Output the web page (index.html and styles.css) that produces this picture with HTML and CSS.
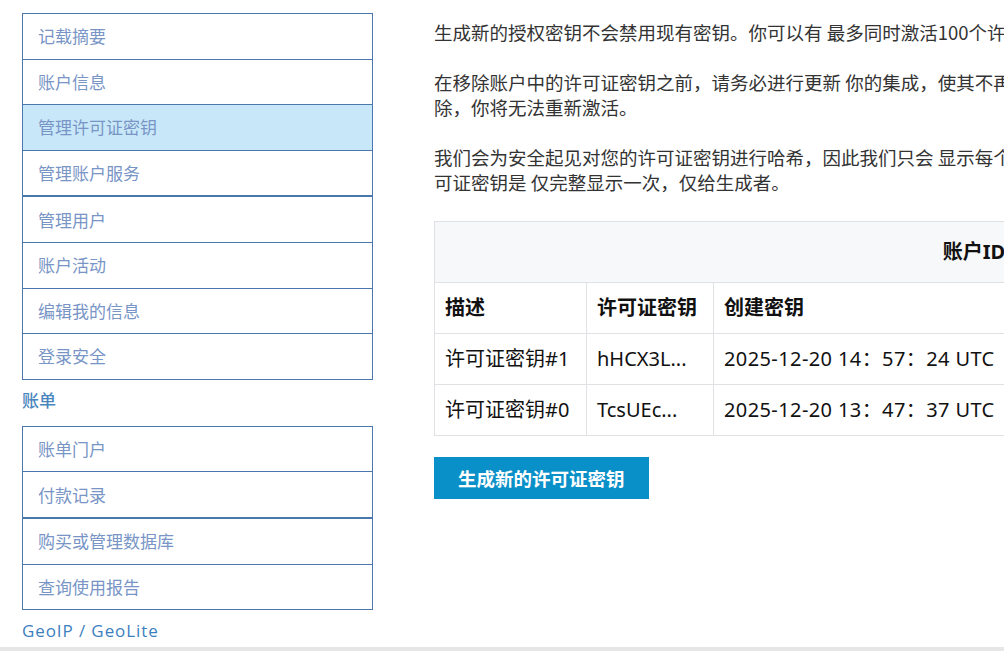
FILE: index.html
```html
<!DOCTYPE html>
<html lang="zh-CN">
<head>
<meta charset="utf-8">
<title>管理许可证密钥</title>
<link rel="stylesheet" href="styles.css">
</head>
<body>
<div class="page">
  <aside class="sidebar">
    <ul class="nav">
      <li><a href="#">记载摘要</a></li>
      <li><a href="#">账户信息</a></li>
      <li class="active"><a href="#">管理许可证密钥</a></li>
      <li><a href="#">管理账户服务</a></li>
    </ul>
    <ul class="nav">
      <li><a href="#">管理用户</a></li>
      <li><a href="#">账户活动</a></li>
      <li><a href="#">编辑我的信息</a></li>
      <li><a href="#">登录安全</a></li>
    </ul>
    <h3 class="nav-title">账单</h3>
    <ul class="nav">
      <li><a href="#">账单门户</a></li>
      <li><a href="#">付款记录</a></li>
    </ul>
    <ul class="nav">
      <li><a href="#">购买或管理数据库</a></li>
      <li><a href="#">查询使用报告</a></li>
    </ul>
    <h3 class="nav-title geo">GeoIP / GeoLite</h3>
  </aside>
  <main class="content">
    <p>生成新的授权密钥不会禁用现有密钥。你可以有 最多同时激活100个许可证密钥。</p>
    <p>在移除账户中的许可证密钥之前，请务必进行更新 你的集成，使其不再使用该密钥。如果许可证密钥被移除，你将无法重新激活。</p>
    <p>我们会为安全起见对您的许可证密钥进行哈希，因此我们只会 显示每个许可证密钥的前几个字符。新的许可证密钥是 仅完整显示一次，仅给生成者。</p>
    <table class="keys">
      <colgroup>
        <col class="c1"><col class="c2"><col class="c3"><col class="c4"><col class="c5">
      </colgroup>
      <thead>
        <tr class="acct"><th colspan="5">账户ID：1283596</th></tr>
        <tr class="heads"><th>描述</th><th>许可证密钥</th><th>创建密钥</th><th>最后使用</th><th>操作</th></tr>
      </thead>
      <tbody>
        <tr><td>许可证密钥#1</td><td>hHCX3L...</td><td>2025-12-20 14：57：24 UTC</td><td>从未使用</td><td>移除</td></tr>
        <tr><td>许可证密钥#0</td><td>TcsUEc...</td><td>2025-12-20 13：47：37 UTC</td><td>从未使用</td><td>移除</td></tr>
      </tbody>
    </table>
    <button class="btn" type="button">生成新的许可证密钥</button>
  </main>
</div>
</body>
</html>
```

FILE: styles.css
```css
html, body {
  margin: 0;
  padding: 0;
  overflow: hidden;
  background: #fff;
}
body {
  font-family: "Noto Sans", "Noto Sans CJK SC", sans-serif;
  color: #222;
  height: 651px;
  box-sizing: border-box;
  border-bottom: 4px solid #e6e6e6;
}
.page {
  display: flex;
  gap: 61px;
  padding-left: 22px;
  width: 1800px;
}
.sidebar {
  width: 351px;
  flex: none;
  padding-top: 13px;
}
.nav {
  list-style: none;
  margin: 0;
  padding: 0;
}
.nav li {
  border: 1px solid #4a78ad;
  margin-top: -1px;
  height: 44.6px;
  display: flex;
  align-items: center;
}
.nav li:first-child {
  margin-top: 0;
}
.nav li a {
  padding-left: 15px;
  font-size: 17px;
  color: #7895c6;
  text-decoration: none;
  font-family: "Noto Sans CJK SC", sans-serif;
  font-weight: 400;
  line-height: 22px;
}
.nav li.active {
  background: #c8e8f9;
}
.nav-title {
  margin: 9px 0 15px;
  font-size: 17px;
  line-height: 22px;
  font-weight: 500;
  color: #4a86bd;
  font-family: "Noto Sans CJK SC", sans-serif;
}
.nav-title.geo {
  margin-top: 10px;
  font-family: "Open Sans", sans-serif;
  font-weight: 500;
  color: #3d7fbf;
  letter-spacing: 0.9px;
}
.content {
  width: 1180px;
  flex: none;
  padding-top: 20px;
}
.content p {
  max-width: 865px;
  margin: 0 0 25px;
  font-size: 18.5px;
  line-height: 25px;
  color: #333;
  font-family: "Noto Sans CJK SC", sans-serif;
}
.keys {
  width: 1180px;
  table-layout: fixed;
  border-collapse: collapse;
  margin-top: 26px;
  font-family: "Noto Sans", "Noto Sans CJK SC", sans-serif;
  font-size: 20px;
  color: #111;
}
.c1 { width: 152px; }
.c2 { width: 127px; }
.c3 { width: 330px; }
.c4 { width: 300px; }
.keys th, .keys td {
  border: 1px solid #dfe1e4;
  padding: 12px 10px;
  line-height: 26px;
  text-align: left;
  white-space: nowrap;
  overflow: hidden;
}
.keys td:nth-child(3) {
  letter-spacing: 0.4px;
}
.keys th {
  font-weight: 700;
}
.keys .acct th {
  background: #f7f8fa;
  text-align: center;
  padding: 17px 10px;
}
.btn {
  display: block;
  margin-top: 21px;
  background: #0a90c8;
  color: #fff;
  border: none;
  font-family: "Noto Sans CJK SC", sans-serif;
  font-size: 18.5px;
  font-weight: 700;
  padding: 0 24px;
  height: 42px;
  line-height: 42px;
  cursor: pointer;
}
```
